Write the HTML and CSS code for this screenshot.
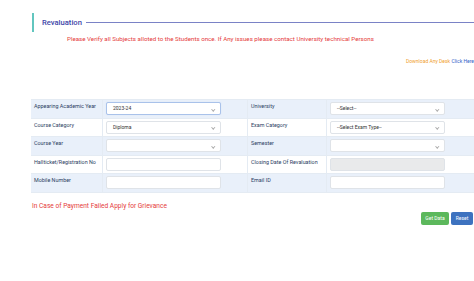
FILE: index.html
```html
<!DOCTYPE html>
<html>
<head>
<meta charset="utf-8">
<link rel="stylesheet" href="styles.css">
</head>
<body>
<div class="page">
  <div class="title-row">
    <span class="title">Revaluation</span>
    <span class="title-line"></span>
  </div>
  <p class="notice">Please Verify all Subjects alloted to the Students once. If Any issues please contact University technical Persons</p>
  <p class="download"><span class="dl-text">Download Any Desk</span> <a class="dl-link">Click Here</a></p>

  <div class="form-grid">
    <div class="row blue">
      <div class="label">Appearing Academic Year</div>
      <div class="field"><div class="input select focus">2023-24<span class="chev"></span></div></div>
      <div class="label">University</div>
      <div class="field"><div class="input select">--Select--<span class="chev"></span></div></div>
    </div>
    <div class="row">
      <div class="label">Course Category</div>
      <div class="field"><div class="input select">Diploma<span class="chev"></span></div></div>
      <div class="label">Exam Category</div>
      <div class="field"><div class="input select">--Select Exam Type--<span class="chev"></span></div></div>
    </div>
    <div class="row blue">
      <div class="label">Course Year</div>
      <div class="field"><div class="input select"><span class="chev"></span></div></div>
      <div class="label">Semester</div>
      <div class="field"><div class="input select"><span class="chev"></span></div></div>
    </div>
    <div class="row">
      <div class="label">Hallticket/Registration No</div>
      <div class="field"><div class="input"></div></div>
      <div class="label">Closing Date Of Revaluation</div>
      <div class="field"><div class="input disabled"></div></div>
    </div>
    <div class="row blue">
      <div class="label">Mobile Number</div>
      <div class="field"><div class="input"></div></div>
      <div class="label">Email ID</div>
      <div class="field"><div class="input"></div></div>
    </div>
  </div>

  <div class="bottom">
    <p class="grievance">In Case of Payment Failed Apply for Grievance</p>
    <div class="buttons">
      <button class="btn green">Get Data</button>
      <button class="btn blue-btn">Reset</button>
    </div>
  </div>
</div>
</body>
</html>
```
FILE: styles.css
```css
html, body {
  margin: 0;
  padding: 0;
  background: #ffffff;
  overflow: hidden;
  font-family: Roboto, "Liberation Sans", Arial, sans-serif;
}

.page {
  width: 474px;
  padding-top: 13px;
  box-sizing: border-box;
}

.title-row {
  margin-left: 32px;
  height: 19px;
  border-left: 2px solid #62c6bf;
  display: flex;
  align-items: center;
  padding-left: 8px;
}

.title {
  font-size: 7.6px;
  font-weight: 500;
  color: #3d45a8;
  white-space: nowrap;
}

.title-line {
  flex: 1;
  height: 1px;
  background: #7a82c6;
  margin-left: 4px;
}

.notice {
  margin: 3px 0 0 67px;
  font-size: 6.2px;
  color: #e53b3b;
  white-space: nowrap;
  line-height: 9px;
}

.download {
  margin: 13px 0 0 0;
  text-align: right;
  font-size: 5px;
  line-height: 8px;
  white-space: nowrap;
}

.dl-text { color: #f0a030; }
.dl-link { color: #2f63c8; }

.form-grid {
  margin: 34px 0 0 31px;
  width: 443px;
  display: flex;
  flex-direction: column;
  border-top: 1px solid #e4ebf3;
}

.row {
  display: grid;
  grid-template-columns: 72px 145px 79px 1fr;
  height: 18.6px;
  border-bottom: 1px solid #e4ebf3;
  box-sizing: border-box;
}

.row.blue { background: #e9f0fa; }

.label {
  font-size: 5.4px;
  color: #2c3e63;
  padding: 3px 0 0 3px;
  border-right: 1px solid #e4ebf3;
  white-space: nowrap;
}

.field {
  padding: 2px 3px 0 3px;
  border-right: 1px solid #e4ebf3;
}

.field:last-child { border-right: none; }

.input {
  position: relative;
  width: 115px;
  height: 13px;
  box-sizing: border-box;
  background: #ffffff;
  border: 1px solid #dfe3e8;
  border-radius: 2px;
  font-size: 5px;
  color: #333;
  padding-left: 6px;
  line-height: 11px;
}

.input.focus {
  border-color: #a9c2ea;
  box-shadow: 0 0 1px #c9d9f3;
}

.input.disabled {
  background: #e9eaeb;
}

.chev {
  position: absolute;
  right: 6px;
  top: 4.5px;
  width: 1.5px;
  height: 1.5px;
  border-right: 0.5px solid #aaa;
  border-bottom: 0.5px solid #aaa;
  transform: rotate(45deg);
}

.bottom {
  margin: 9px 0 0 32px;
  display: flex;
  flex-direction: column;
}

.grievance {
  margin: 0;
  font-size: 6.6px;
  color: #e53b3b;
  line-height: 9px;
}

.buttons {
  display: flex;
  justify-content: flex-end;
  gap: 2px;
  margin-top: 1px;
  padding-right: 1px;
}

.btn {
  border: none;
  border-radius: 2px;
  color: #ffffff;
  font-family: Roboto, "Liberation Sans", Arial, sans-serif;
  font-size: 5px;
  height: 13px;
  padding: 0;
  cursor: pointer;
}

.btn.green { background: #5cb85c; width: 28px; }
.btn.blue-btn { background: #3d72bf; width: 22px; }
```
